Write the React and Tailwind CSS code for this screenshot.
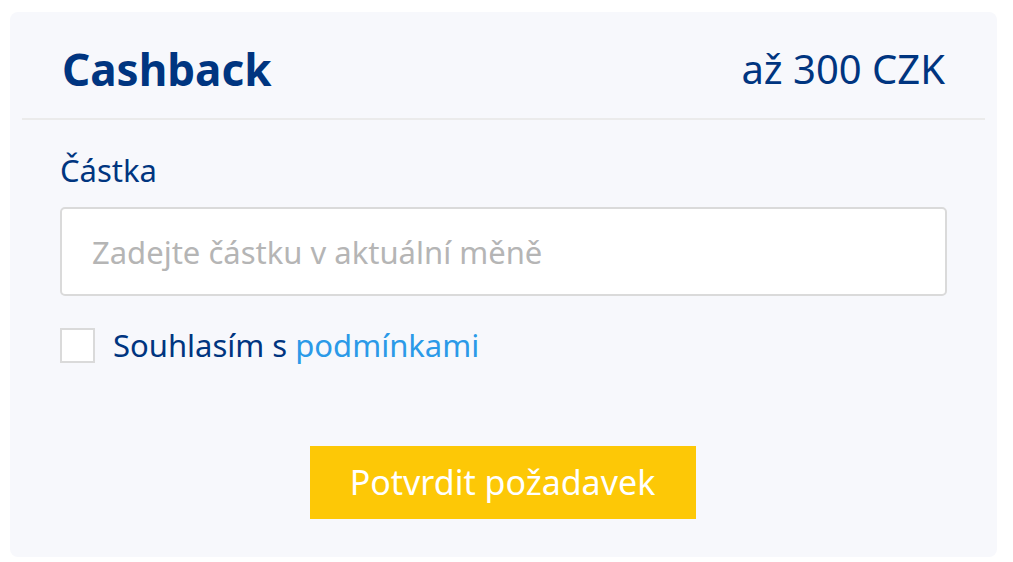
export default function App() {
  return (
    <div className="w-[1013px] h-[562px] bg-white pt-[12px] pl-[10px] font-['Noto_Sans',sans-serif]">
      <div className="w-[987px] h-[545px] bg-[#f7f8fc] rounded-[8px] flex flex-col">
        {/* Header */}
        <div className="mx-[12px] h-[108px] px-[40px] pt-[8px] flex items-center justify-between border-b-2 border-[#ebebeb] text-[#003580]">
          <h1 className="text-[44px] font-bold leading-none">Cashback</h1>
          <span className="text-[40px] leading-none">až 300 CZK</span>
        </div>

        {/* Body */}
        <div className="px-[50px] pt-[30px] flex flex-col">
          <label className="text-[31px] leading-[40px] text-[#003580]">Částka</label>
          <input
            type="text"
            placeholder="Zadejte částku v aktuální měně"
            className="mt-[17px] h-[89px] w-full bg-white border-2 border-[#dadada] rounded-[5px] px-[30px] text-[31px] text-[#003580] placeholder:text-[#b5b5b5] outline-none"
          />
          <div className="mt-[29px] flex items-center gap-[18px]">
            <span className="w-[35px] h-[35px] bg-white border-2 border-[#dadada]" />
            <span className="text-[31px] leading-[40px] text-[#003580]">
              Souhlasím s <a className="text-[#2b9ae8]">podmínkami</a>
            </span>
          </div>
          <div className="mt-[81px] flex justify-center">
            <button className="w-[386px] h-[73px] bg-[#fdc806] text-white text-[34px] -translate-x-[1px]">
              Potvrdit požadavek
            </button>
          </div>
        </div>
      </div>
    </div>
  );
}
